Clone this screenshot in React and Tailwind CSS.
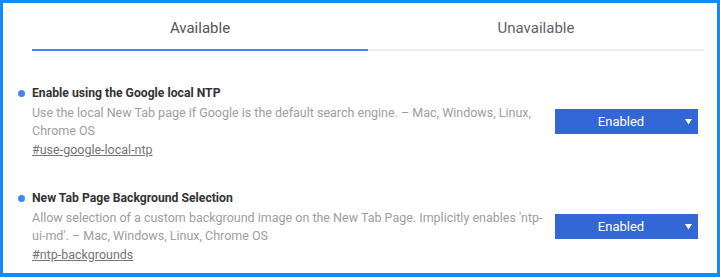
import React from "react";

const FLAGS = [
  {
    id: "use-google-local-ntp",
    title: "Enable using the Google local NTP",
    desc: "Use the local New Tab page if Google is the default search engine. – Mac, Windows, Linux, Chrome OS",
  },
  {
    id: "ntp-backgrounds",
    title: "New Tab Page Background Selection",
    desc: "Allow selection of a custom background image on the New Tab Page. Implicitly enables 'ntp-ui-md'. – Mac, Windows, Linux, Chrome OS",
  },
];

function FlagRow({ flag }) {
  return (
    <div className="flex items-center">
      <div className="w-[514px] text-[12.5px] leading-[18px]">
        <div className="flex items-center text-[#333] font-bold text-[12.2px] mb-[2px]">
          <span className="-ml-[14px] mr-[7px] w-[7px] h-[7px] rounded-full bg-[#4285f4]" />
          {flag.title}
        </div>
        <p className="text-[#9e9e9e]">{flag.desc}</p>
        <a className="block mt-[1px] text-[#757575] underline">#{flag.id}</a>
      </div>
      <div className="ml-[9px] w-[143px] h-[25px] bg-[#3367d6] text-white text-[13px] flex items-center pl-[2px] pr-[6px]">
        <span className="flex-1 text-center">Enabled</span>
        <svg width="7" height="6" viewBox="0 0 7 6">
          <path d="M0 0 H7 L3.5 5.5 Z" fill="white" />
        </svg>
      </div>
    </div>
  );
}

export default function App() {
  return (
    <div
      className="w-[720px] h-[277px] bg-white border-[3px] border-b-[4px] border-[#1589f7] overflow-hidden"
      style={{ fontFamily: "Roboto, 'Liberation Sans', sans-serif" }}
    >
      {/* Tabs */}
      <div className="flex ml-[29px] w-[672px]">
        <div className="flex-1 h-[48px] pt-[4px] flex items-center justify-center text-[15px] text-[#555] border-b-2 border-[#4285f4]">
          Available
        </div>
        <div className="flex-1 h-[48px] pt-[4px] flex items-center justify-center text-[15px] text-[#5f6368] border-b-2 border-[#eeeeee]">
          Unavailable
        </div>
      </div>

      {/* Flags */}
      <div className="pl-[29px] pt-[33px] flex flex-col gap-[30px]">
        {FLAGS.map((flag) => (
          <FlagRow key={flag.id} flag={flag} />
        ))}
      </div>
    </div>
  );
}
